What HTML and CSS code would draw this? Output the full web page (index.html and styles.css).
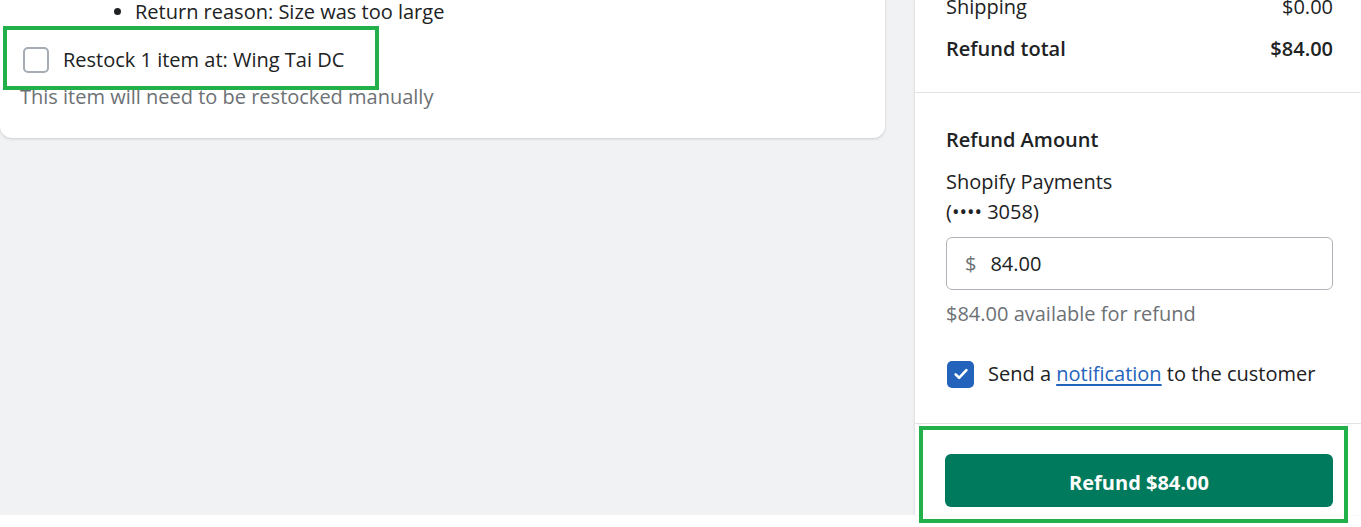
FILE: index.html
```html
<!DOCTYPE html>
<html lang="en">
<head>
<meta charset="utf-8">
<link rel="stylesheet" href="styles.css">
</head>
<body>
<div class="page">
  <div class="main">
    <div class="card">
      <ul class="reasons">
        <li>Return reason: Size was too large</li>
      </ul>
      <label class="restock">
        <span class="box"></span>
        <span>Restock 1 item at: Wing Tai DC</span>
      </label>
      <p class="hint">This item will need to be restocked manually</p>
    </div>
  </div>
  <aside class="side">
    <section class="summary">
      <div class="row"><span>Shipping</span><span>$0.00</span></div>
      <div class="row total"><span>Refund total</span><span>$84.00</span></div>
    </section>
    <section class="amount">
      <h2 class="title">Refund Amount</h2>
      <div class="method">Shopify Payments<br>(•••• 3058)</div>
      <div class="field"><span class="cur">$</span><span class="val">84.00</span></div>
      <div class="avail">$84.00 available for refund</div>
      <label class="notify">
        <span class="check"><svg width="18" height="18" viewBox="0 0 18 18"><path d="M3.6 9.4l3.5 3.4 7.3-7.6" fill="none" stroke="#fff" stroke-width="2.6" stroke-linecap="round" stroke-linejoin="round"/></svg></span>
        <span>Send a <a class="link" href="#">notification</a> to the customer</span>
      </label>
    </section>
    <section class="foot">
      <button class="refund">Refund $84.00</button>
    </section>
  </aside>
</div>
<div class="mark mark-restock"></div>
<div class="mark mark-button"></div>
</body>
</html>
```
FILE: styles.css
```css
* { box-sizing: border-box; }
html, body { margin: 0; padding: 0; background: #fff; }
body {
  font-family: "Open Sans", "Noto Sans", sans-serif;
  font-size: 20px;
  line-height: 30px;
  color: #202223;
  position: relative;
  overflow: hidden;
  height: 527px;
}
.page {
  display: flex;
  height: 515px;
  background: #f1f2f4;
}
.main { width: 915px; flex: none; }
.card {
  width: 885px;
  background: #fff;
  border-radius: 0 0 12px 12px;
  box-shadow: 0 1px 3px rgba(0,0,0,0.16);
  padding: 0 0 26px 20px;
}
.reasons { margin: -3px 0 0; padding-left: 115px; }
.reasons li { line-height: 30px; }
.restock {
  display: flex;
  align-items: center;
  gap: 14px;
  margin-top: 18px;
  padding-left: 3px;
  height: 30px;
}
.box {
  width: 26px; height: 26px;
  border: 2px solid #a6acb4;
  border-radius: 5px;
  flex: none;
}
.hint { margin: 7px 0 0; color: #6d7175; }

.side {
  flex: 1;
  background: #fff;
  box-shadow: -1px 0 2px rgba(0,0,0,0.08);
}
.summary { padding: 0 28px 28px 31px; border-bottom: 1px solid #e1e3e5; }
.row { display: flex; justify-content: space-between; }
.summary .row:first-child { margin-top: -8px; }
.total { margin-top: 12px; font-weight: 600; }
.amount { padding: 32px 28px 34px 31px; border-bottom: 1px solid #e1e3e5; }
.title { margin: 0; font-size: 20px; line-height: 30px; font-weight: 600; }
.method { margin-top: 12px; }
.field {
  margin-top: 10px;
  height: 53px;
  border: 1px solid #aeb4b9;
  border-radius: 6px;
  display: flex;
  align-items: center;
  padding-left: 18px;
  gap: 14px;
}
.cur { color: #6d7175; }
.avail { margin-top: 9px; color: #6d7175; }
.notify { display: flex; align-items: center; gap: 14px; margin-top: 30px; padding-left: 1px; }
.check {
  width: 27px; height: 27px;
  background: #2463bc;
  border-radius: 5px;
  display: flex; align-items: center; justify-content: center;
  flex: none;
}
.link { color: #2463bc; text-decoration: underline; text-underline-offset: 3px; }
.foot { padding: 30px 28px 8px 30px; }
.refund {
  display: block;
  width: 100%;
  height: 53px;
  border: 0;
  border-radius: 6px;
  background: #007a5c;
  color: #fff;
  font-family: inherit;
  font-size: 20px;
  font-weight: 700;
  padding: 3px 0 0;
}
.mark { position: absolute; border: 4px solid #22b04b; }
.mark-restock { left: 3px; top: 26px; width: 376px; height: 64px; }
.mark-button { left: 919px; top: 426px; width: 429px; height: 97px; }
```
